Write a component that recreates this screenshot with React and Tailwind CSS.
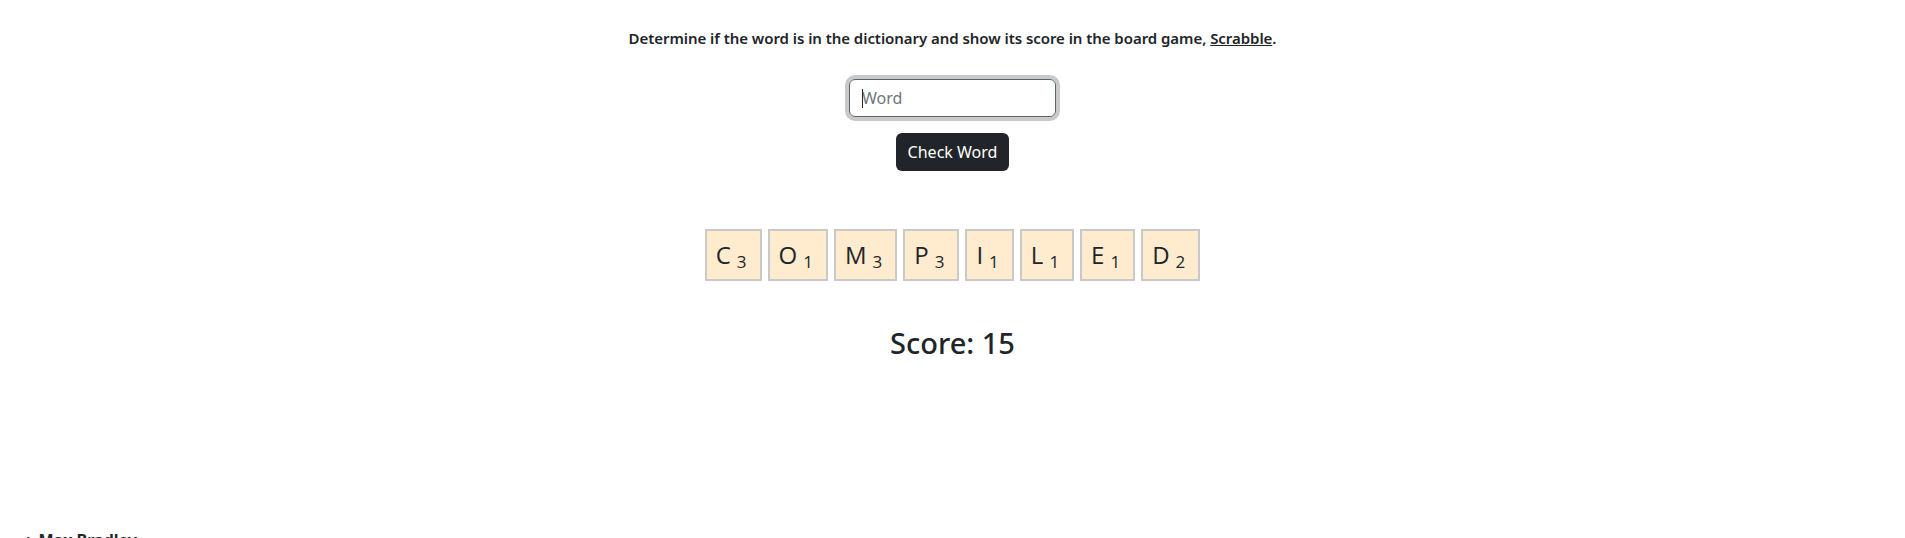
const tiles = [
  ['C', 3],
  ['O', 1],
  ['M', 3],
  ['P', 3],
  ['I', 1],
  ['L', 1],
  ['E', 1],
  ['D', 2],
];

const font = { fontFamily: '"Noto Sans", "Open Sans", sans-serif' };

function Tile({ letter, points }) {
  return (
    <span className="flex items-baseline border-2 border-[#c9c9c9] bg-[#ffebcd] pl-[9px] pr-[13px] pt-[9px] pb-[9px] font-['Open_Sans',sans-serif] text-[24px] leading-[30px] text-[#212529]">
      {letter}
      <span className="ml-[6px] relative top-[4px] text-[17px] leading-none">{points}</span>
    </span>
  );
}

export default function App() {
  return (
    <div className="flex flex-col text-[#212529]" style={font}>
      <main className="h-[528px] flex flex-col items-center">
        <p className="mt-[27px] text-[15px] leading-[22px] font-semibold tracking-[-0.05px]">
          Determine if the word is in the dictionary and show its score in the board game,{' '}
          <a href="#" className="underline">Scrabble</a>.
        </p>
        <div className="relative mt-[30px]">
          <input
            type="text"
            placeholder="Word"
            className="w-[207px] h-[38px] rounded-[6px] border border-[#5c636a] px-3 text-base text-[#212529] placeholder:text-[#6c757d] outline-none ring-4 ring-[#c8c9ca]"
          />
          <span className="absolute left-[13px] top-[10px] h-[19px] w-px bg-[#212529]" />
        </div>
        <button className="mt-4 h-[38px] rounded-[6px] bg-[#212529] px-3 text-base text-white">
          Check Word
        </button>
        <div className="mt-[58px] flex gap-[6px]">
          {tiles.map(([l, p]) => (
            <Tile key={l} letter={l} points={p} />
          ))}
        </div>
        <h3 className="mt-[45px] text-[29px] leading-[1.2] font-medium">Score: 15</h3>
      </main>
      <footer className="flex items-center gap-2 pl-[26px] text-base font-bold leading-6">
        <span className="text-xs">•</span>
        <span>Max Bradley</span>
      </footer>
    </div>
  );
}
